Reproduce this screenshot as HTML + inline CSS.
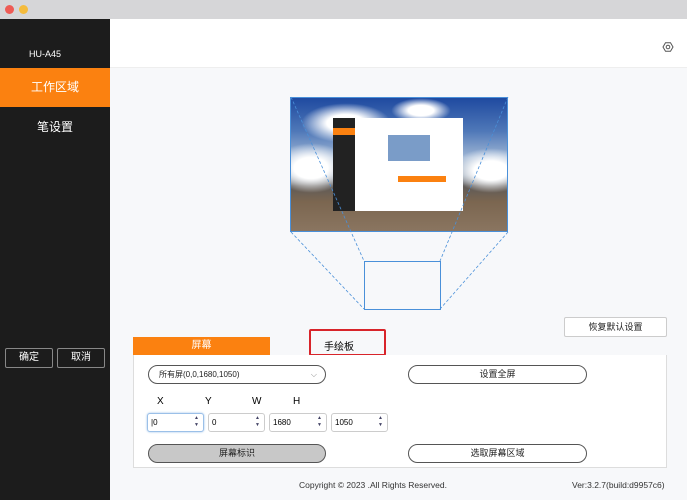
<!DOCTYPE html>
<html><head><meta charset="utf-8"><style>
*{margin:0;padding:0;box-sizing:border-box}
body{width:687px;height:500px;overflow:hidden;font-family:"Liberation Sans","Noto Sans CJK SC",sans-serif;background:#f7f8fa;position:relative}
.a{position:absolute}
.btn{position:absolute;border:1px solid #555;border-radius:10px;background:#fff;font-size:9px;text-align:center;color:#222}
.inp{position:absolute;border:1px solid #ccc;border-radius:3px;background:#fff;font-size:8px;padding-left:3px;line-height:17px;height:19px}
.inp span{position:absolute;right:4px;top:1px;font-size:5px;line-height:7px;color:#446}
.cl{position:absolute;border-radius:50%;background:radial-gradient(#fff 30%,rgba(255,255,255,0) 70%)}
</style></head><body>
<div class="a" style="left:0;top:0;width:687px;height:19px;background:#d6d6d8"></div>
<div class="a" style="left:5px;top:5px;width:9px;height:9px;border-radius:50%;background:#ee5b55"></div>
<div class="a" style="left:19px;top:5px;width:9px;height:9px;border-radius:50%;background:#f4bb3c"></div>
<div class="a" style="left:0;top:19px;width:110px;height:481px;background:#1c1c1c"></div>
<div class="a" style="left:29px;top:49px;color:#fff;font-size:9px">HU-A45</div>
<div class="a" style="left:0;top:68px;width:110px;height:39px;background:#fb8110;color:#fff;font-size:12px;text-align:center;line-height:39px">工作区域</div>
<div class="a" style="left:0;top:118px;width:110px;color:#fff;font-size:12px;text-align:center">笔设置</div>
<div class="a" style="left:5px;top:348px;width:48px;height:20px;border:1px solid #888;border-radius:2px;color:#fff;font-size:10px;text-align:center;line-height:18px">确定</div>
<div class="a" style="left:57px;top:348px;width:48px;height:20px;border:1px solid #888;border-radius:2px;color:#fff;font-size:10px;text-align:center;line-height:18px">取消</div>
<div class="a" style="left:110px;top:19px;width:577px;height:49px;background:#fff;border-bottom:1px solid #eee"></div>
<svg class="a" style="left:662px;top:41px" width="12" height="12" viewBox="0 0 12 12"><path d="M3.5 1.7h5L11 6 8.5 10.3h-5L1 6z" fill="none" stroke="#555" stroke-width="1"/><circle cx="6" cy="6" r="1.8" fill="none" stroke="#555"/></svg>
<div class="a" style="left:290px;top:97px;width:218px;height:135px;overflow:hidden;background:linear-gradient(#1f4aa0 0%,#4f78b8 25%,#9fb6d4 45%,#8a9aae 58%,#5e5a58 66%,#7b6650 78%,#8a7560 100%);border:1px solid #4a90d9">
<div class="cl" style="left:10px;top:5px;width:90px;height:40px"></div>
<div class="cl" style="left:-20px;top:45px;width:80px;height:50px"></div>
<div class="cl" style="left:160px;top:50px;width:80px;height:45px"></div>
<div class="cl" style="left:100px;top:0px;width:60px;height:25px"></div>
</div>
<div class="a" style="left:333px;top:118px;width:22px;height:93px;background:#222"></div>
<div class="a" style="left:333px;top:128px;width:22px;height:7px;background:#fb8110"></div>
<div class="a" style="left:355px;top:118px;width:108px;height:93px;background:#fff"></div>
<div class="a" style="left:388px;top:135px;width:42px;height:26px;background:#7a9cc8"></div>
<div class="a" style="left:398px;top:176px;width:48px;height:6px;background:#fb8110"></div>
<svg class="a" style="left:285px;top:92px" width="230" height="222">
<line x1="6" y1="5" x2="79" y2="169" stroke="#4a90d9" stroke-width=".8" stroke-dasharray="3,2"/>
<line x1="223" y1="5" x2="155" y2="169" stroke="#4a90d9" stroke-width=".8" stroke-dasharray="3,2"/>
<line x1="6" y1="140" x2="79" y2="217" stroke="#4a90d9" stroke-width=".8" stroke-dasharray="3,2"/>
<line x1="223" y1="140" x2="155" y2="217" stroke="#4a90d9" stroke-width=".8" stroke-dasharray="3,2"/>
<rect x="79.5" y="169.5" width="76" height="48" fill="none" stroke="#4a90d9"/>
</svg>
<div class="a" style="left:133px;top:337px;width:137px;height:18px;background:#fb8110;color:#fff;font-size:10px;text-align:center;line-height:18px">屏幕</div>
<div class="a" style="left:309px;top:329px;width:77px;height:27px;border:2px solid #d8242a;border-radius:2px;font-size:10px;padding:7px 0 0 13px">手绘板</div>
<div class="btn" style="left:564px;top:317px;width:103px;height:20px;border-color:#ccc;border-radius:2px;line-height:18px">恢复默认设置</div>
<div class="a" style="left:133px;top:355px;width:534px;height:113px;background:#fff;border:1px solid #ddd;border-top:none"></div>
<div class="btn" style="left:148px;top:365px;width:178px;height:19px;text-align:left;padding-left:10px;line-height:17px;font-size:8px">所有屏(0,0,1680,1050)<span style="position:absolute;right:8px;color:#888">⌵</span></div>
<div class="btn" style="left:408px;top:365px;width:179px;height:19px;line-height:17px">设置全屏</div>
<div class="a" style="left:157px;top:396px;font-size:10px">X</div>
<div class="a" style="left:205px;top:396px;font-size:10px">Y</div>
<div class="a" style="left:252px;top:396px;font-size:10px">W</div>
<div class="a" style="left:293px;top:396px;font-size:10px">H</div>
<div class="inp" style="left:147px;top:413px;width:57px;border-color:#9bc0e8;box-shadow:0 0 2px #9bc0e8">|0<span>▲<br>▼</span></div>
<div class="inp" style="left:208px;top:413px;width:57px">0<span>▲<br>▼</span></div>
<div class="inp" style="left:269px;top:413px;width:58px">1680<span>▲<br>▼</span></div>
<div class="inp" style="left:331px;top:413px;width:57px">1050<span>▲<br>▼</span></div>
<div class="btn" style="left:148px;top:444px;width:178px;height:19px;line-height:17px;background:#c8c8c8">屏幕标识</div>
<div class="btn" style="left:408px;top:444px;width:179px;height:19px;line-height:17px">选取屏幕区域</div>
<div class="a" style="left:299px;top:480px;font-size:8.5px;color:#333">Copyright © 2023 .All Rights Reserved.</div>
<div class="a" style="left:572px;top:480px;font-size:8.5px;color:#333">Ver:3.2.7(build:d9957c6)</div>
</body></html>
